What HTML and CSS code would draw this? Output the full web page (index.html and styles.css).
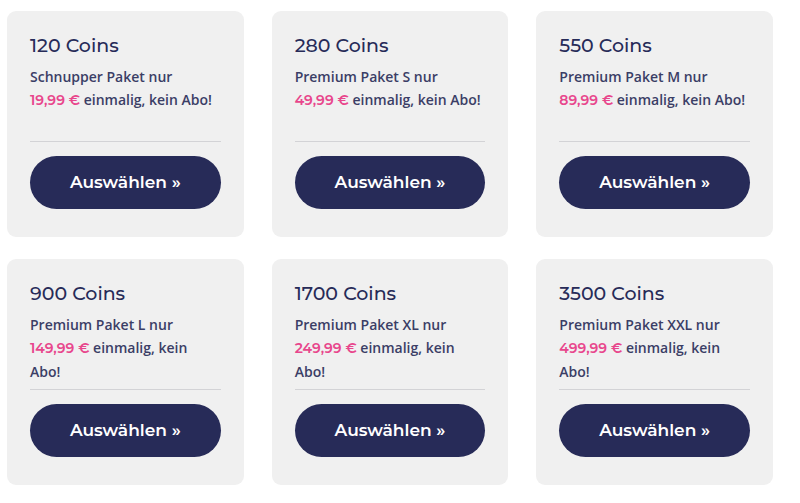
FILE: index.html
```html
<!DOCTYPE html>
<html lang="de">
<head>
  <meta charset="UTF-8" />
  <meta name="viewport" content="width=device-width, initial-scale=1.0"/>
  <title>Coins kaufen</title>
  <link rel="stylesheet" href="styles.css">
</head>
<body>
  <main class="packages">
    <section class="card">
      <h2>120 Coins</h2>
      <p>Schnupper Paket nur<br><strong>19,99 €</strong> einmalig, kein Abo!</p>
      <button type="button">Auswählen »</button>
    </section>
    <section class="card">
      <h2>280 Coins</h2>
      <p>Premium Paket S nur<br><strong>49,99 €</strong> einmalig, kein Abo!</p>
      <button type="button">Auswählen »</button>
    </section>
    <section class="card">
      <h2>550 Coins</h2>
      <p>Premium Paket M nur<br><strong>89,99 €</strong> einmalig, kein Abo!</p>
      <button type="button">Auswählen »</button>
    </section>
    <section class="card">
      <h2>900 Coins</h2>
      <p>Premium Paket L nur<br><strong>149,99 €</strong> einmalig, kein Abo!</p>
      <button type="button">Auswählen »</button>
    </section>
    <section class="card">
      <h2>1700 Coins</h2>
      <p>Premium Paket XL nur<br><strong>249,99 €</strong> einmalig, kein Abo!</p>
      <button type="button">Auswählen »</button>
    </section>
    <section class="card">
      <h2>3500 Coins</h2>
      <p>Premium Paket XXL nur<br><strong>499,99 €</strong> einmalig, kein Abo!</p>
      <button type="button">Auswählen »</button>
    </section>
  </main>
</body>
</html>
```

FILE: styles.css
```css
* {
  box-sizing: border-box;
}
body {
  margin: 0;
  padding: 11px 27px 18px 7px;
  background: #fff;
  color: #272b58;
  font-family: "Open Sans", sans-serif;
}
.packages {
  display: grid;
  grid-template-columns: repeat(3, 1fr);
  gap: 22px 28px;
}
.card {
  display: flex;
  flex-direction: column;
  padding: 21px 23px 28px;
  background: #f0f0f0;
  border-radius: 9px;
}
h2 {
  margin: 0 0 5px;
  font-family: Montserrat, Inter, sans-serif;
  font-size: 19px;
  font-weight: 500;
  line-height: 28px;
}
p {
  min-height: 77px;
  margin: 0 0 14px;
  border-bottom: 1px solid #d3d3d6;
  color: #3b3e66;
  font-size: 14px;
  font-weight: 600;
  line-height: 23px;
}
strong {
  color: #e8468c;
  font-family: Montserrat, Inter, sans-serif;
  font-size: 14px;
  font-weight: 600;
}
button {
  height: 53px;
  padding: 0 6px 2px;
  border: none;
  border-radius: 27px;
  background: #272b58;
  color: #fff;
  font-family: Montserrat, Inter, sans-serif;
  font-size: 17px;
  font-weight: 600;
  cursor: pointer;
}
```
